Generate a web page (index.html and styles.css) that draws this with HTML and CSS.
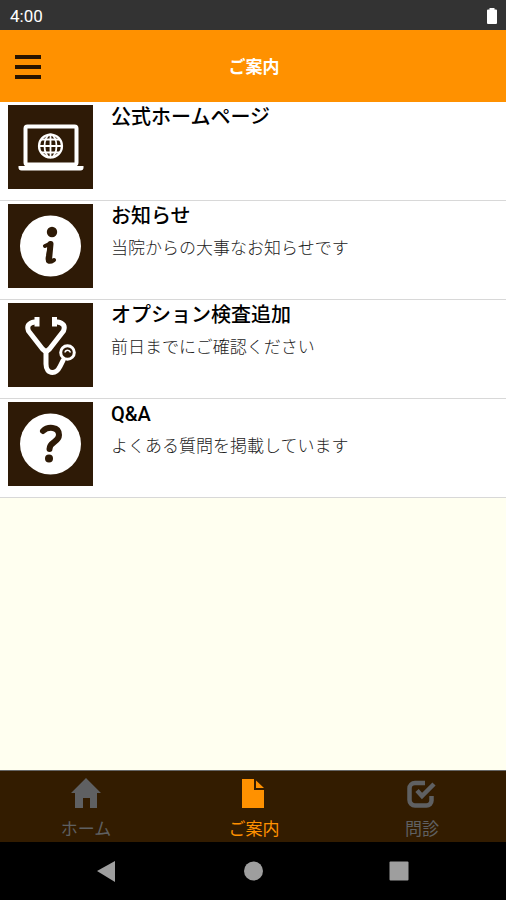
FILE: index.html
```html
<!DOCTYPE html>
<html lang="ja">
  <head>
    <meta charset="UTF-8" />
    <meta name="viewport" content="width=device-width, initial-scale=1.0" />
    <title>ご案内</title>
    <link rel="stylesheet" href="styles.css">
  </head>
  <body>
    <!-- ステータスバー -->
    <div class="status-bar">
      <span>4:00</span>
      <svg class="battery" viewBox="0 0 12 18" aria-hidden="true">
        <path d="M3.5 1h5v1.5H10a1 1 0 0 1 1 1V16a1 1 0 0 1-1 1H2a1 1 0 0 1-1-1V3.500a1 1 0 0 1 1-1h1.500z" fill="#fff" />
      </svg>
    </div>

    <!-- ヘッダー -->
    <header class="header">
      <button class="menu-button" type="button" aria-label="メニュー">
        <span></span>
        <span></span>
        <span></span>
      </button>
      <h1>ご案内</h1>
    </header>

    <!-- メニュー一覧 -->
    <main class="list">
      <a class="item" href="#home-page">
        <svg class="item-icon" viewBox="0 0 84 84" aria-hidden="true">
          <rect x="17" y="21.500" width="51" height="38" rx="2" fill="none" stroke="#fff" stroke-width="4" />
          <path d="M10 61h65v1.500a3 3 0 0 1-3 3H13a3 3 0 0 1-3-3z" fill="#fff" />
          <g fill="none" stroke="#fff" stroke-width="1.800">
            <circle cx="42" cy="41" r="11.500" stroke-width="2.200" />
            <ellipse cx="42" cy="41" rx="6" ry="11.500" />
            <path d="M42 29.500v23M30.500 41h23M33 34.500h18M33 47.500h18" />
          </g>
        </svg>
        <div class="item-text">
          <h2>公式ホームページ</h2>
        </div>
      </a>
      <a class="item" href="#news">
        <svg class="item-icon" viewBox="0 0 84 84" aria-hidden="true">
          <circle cx="42" cy="42" r="30.500" fill="#fff" />
          <circle cx="43.500" cy="28" r="5.200" fill="#2e1a06" />
          <path d="M36.500 42L42 39.500 39.500 52c-1.500 6 1 7.500 6 4" fill="none" stroke="#2e1a06" stroke-width="4" stroke-linecap="round" stroke-linejoin="round" />
          <path d="M42 40L40.500 56" fill="none" stroke="#2e1a06" stroke-width="6" stroke-linecap="round" />
        </svg>
        <div class="item-text">
          <h2>お知らせ</h2>
          <p>当院からの大事なお知らせです</p>
        </div>
      </a>
      <a class="item" href="#option">
        <svg class="item-icon" viewBox="0 0 84 84" aria-hidden="true">
          <g fill="none" stroke="#fff" stroke-width="5" stroke-linecap="round" stroke-linejoin="round">
            <path d="M26 19c-6 1-8 4-6 9L34 46q3.500 4 7 0L55 28c2-5 0-8-6-9" />
            <path d="M37.500 49v12c0 5.500 2.500 8.500 6.500 8.500s6-3 7.500-6l3-6" />
            <circle cx="59" cy="49.500" r="6.800" stroke-width="3" />
          </g>
          <path d="M26 14h5v9.500h-5zM43.500 14h5v9.500h-5z" fill="#fff" />
          <path d="M56.500 49.500c.5-3 4.500-3 5.500 0" fill="none" stroke="#fff" stroke-width="1.500" />
        </svg>
        <div class="item-text">
          <h2>オプション検査追加</h2>
          <p>前日までにご確認ください</p>
        </div>
      </a>
      <a class="item" href="#qa">
        <svg class="item-icon" viewBox="0 0 84 84" aria-hidden="true">
          <circle cx="42" cy="42" r="30.500" fill="#fff" />
          <path d="M34.500 29C39 24.500 50.500 24 50.500 33c0 7.500-9.500 6.500-9.500 14" fill="none" stroke="#2e1a06" stroke-width="6" stroke-linecap="round" stroke-linejoin="round" />
          <circle cx="40.500" cy="56.500" r="4" fill="#2e1a06" />
        </svg>
        <div class="item-text">
          <h2>Q&amp;A</h2>
          <p>よくある質問を掲載しています</p>
        </div>
      </a>
    </main>

    <!-- タブバー -->
    <nav class="tabs">
      <a class="tab" href="#top">
        <svg viewBox="0 0 32 32" aria-hidden="true">
          <path d="M16 1L31 16h-4v15h-7V21h-7v10H5V16H1z" fill="currentColor" />
        </svg>
        <span>ホーム</span>
      </a>
      <a class="tab active" href="#guide">
        <svg viewBox="0 0 32 32" aria-hidden="true">
          <path d="M4 2h12v11h10v18H4z" fill="currentColor" />
          <path d="M18 3.500V11h8z" fill="currentColor" />
        </svg>
        <span>ご案内</span>
      </a>
      <a class="tab" href="#interview">
        <svg viewBox="0 0 32 32" aria-hidden="true">
          <g fill="none" stroke="currentColor" stroke-width="4.500">
            <path d="M19 6H9a5.500 5.500 0 0 0-5.500 5.500V23A5.500 5.500 0 0 0 9 28.500h11.500a5 5 0 0 0 5-5V19" />
            <path d="M11 13.500l5 5.500L28 7" />
          </g>
        </svg>
        <span>問診</span>
      </a>
    </nav>

    <!-- システムナビゲーション -->
    <div class="system-nav">
      <button type="button" aria-label="戻る">
        <svg viewBox="0 0 22 22"><path d="M1 11L19 1v21z" fill="#9e9e9e" /></svg>
      </button>
      <button type="button" aria-label="ホーム画面">
        <svg viewBox="0 0 22 22"><circle cx="11.500" cy="11" r="9.500" fill="#9e9e9e" /></svg>
      </button>
      <button type="button" aria-label="アプリ履歴">
        <svg viewBox="0 0 22 22"><rect x="1.500" y="1.500" width="19" height="19" rx="1" fill="#9e9e9e" /></svg>
      </button>
    </div>
  </body>
</html>
```
FILE: styles.css
```css
/* 共通 */
* {
  box-sizing: border-box;
}

body {
  display: flex;
  flex-direction: column;
  min-height: 100vh;
  margin: 0;
  background-color: #fffff0;
  color: #000;
  font-family: Roboto, "Noto Sans CJK JP", sans-serif;
}

h1,
h2,
p {
  margin: 0;
}

a {
  color: inherit;
  text-decoration: none;
}

button {
  padding: 0;
  border: 0;
  background: none;
  cursor: pointer;
}

svg {
  display: block;
}

/* ステータスバー */
.status-bar {
  display: flex;
  align-items: center;
  justify-content: space-between;
  height: 30px;
  padding: 2px 8px 0 10px;
  background-color: #333;
  color: #fff;
  font-size: 17px;
}

.battery {
  width: 12px;
  height: 18px;
}

/* ヘッダー */
.header {
  display: grid;
  grid-template-columns: 26px 1fr 26px;
  align-items: center;
  height: 72px;
  padding: 2px 13px 0 15px;
  background-color: #ff9100;
}

.header h1 {
  color: #fff;
  font-size: 17px;
  line-height: 24px;
  text-align: center;
}

.menu-button {
  display: flex;
  flex-direction: column;
  gap: 6px;
}

.menu-button span {
  width: 26px;
  height: 4px;
  background-color: #2a1500;
}

/* 一覧 */
.list {
  flex: 1;
}

.item {
  display: flex;
  gap: 18px;
  min-height: 99px;
  padding: 0 8px;
  border-bottom: 1px solid #d8d8d8;
  background-color: #fff;
}

.item-icon {
  flex: none;
  width: 85px;
  height: 84px;
  margin-top: 3px;
  background-color: #2e1a06;
}

.item-text h2 {
  font-size: 20px;
  font-weight: 500;
  line-height: 30px;
}

.item-text p {
  padding-top: 2px;
  color: #222;
  font-size: 17px;
  font-weight: 300;
  line-height: 30px;
}

/* タブバー */
.tabs {
  display: grid;
  grid-template-columns: repeat(3, 1fr);
  height: 72px;
  padding-left: 2px;
  border-top: 1px solid #666;
  background-color: #331c00;
}

.tab {
  display: flex;
  flex-direction: column;
  align-items: center;
  padding-top: 6px;
  color: #5f6062;
  font-size: 17px;
  line-height: 24px;
}

.tab svg {
  width: 32px;
  height: 32px;
  margin-bottom: 8px;
}

.tab.active {
  color: #ff9100;
}

/* システムナビゲーション */
.system-nav {
  display: flex;
  align-items: center;
  justify-content: space-between;
  height: 58px;
  padding: 0 19%;
  background-color: #000;
}

.system-nav svg {
  width: 22px;
  height: 22px;
}
```
